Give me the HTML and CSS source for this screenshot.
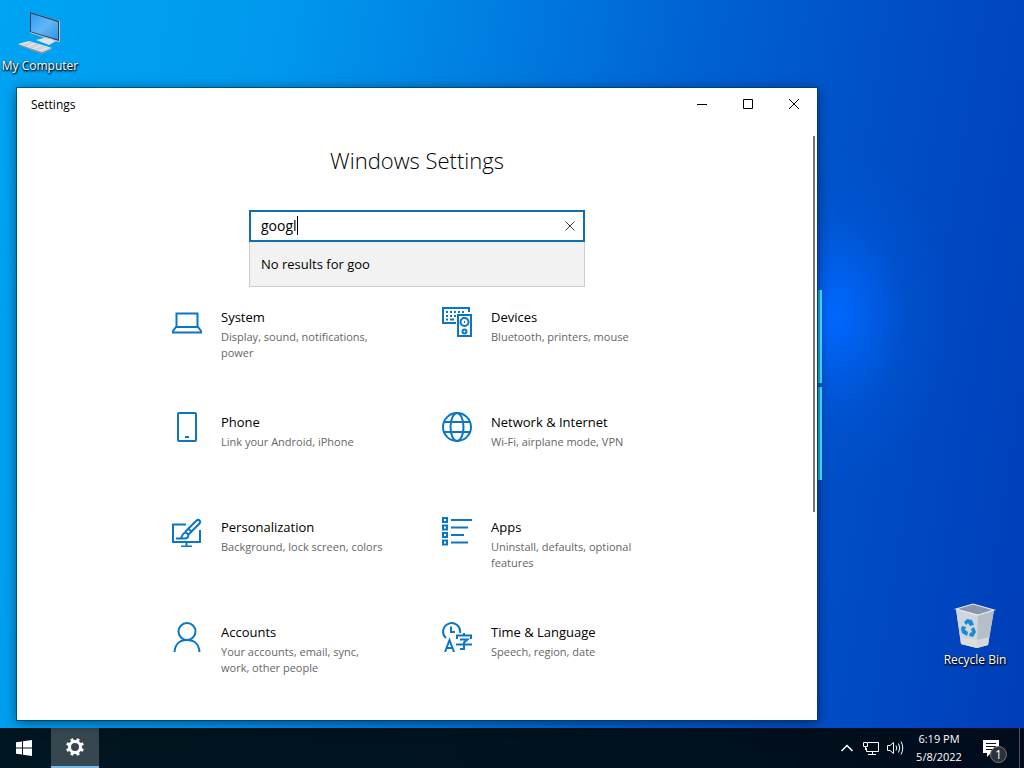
FILE: index.html
```html
<!DOCTYPE html>
<html lang="en">
<head>
<meta charset="utf-8">
<title>Windows Settings</title>
<link rel="stylesheet" href="styles.css">
</head>
<body>
<main class="desktop">
  <div class="logo-pane logo-pane-top"></div>
  <div class="logo-pane logo-pane-bottom"></div>

  <a class="shortcut shortcut-computer" href="#computer">
    <svg width="48" height="48" viewBox="0 0 48 48" aria-hidden="true">
      <defs><linearGradient id="screen" x1="0" y1="0" x2="1" y2="1"><stop offset="0" stop-color="#2f9cf0"/><stop offset=".5" stop-color="#62b6f8"/><stop offset="1" stop-color="#2f93e8"/></linearGradient></defs>
      <path d="M14 4 44 13V33.500L42 34 14 25Z" fill="#c9c4b8"/>
      <path d="M14 4 43 13V33L14 24Z" fill="#203e60"/>
      <path d="M15 5.500 42 14V31.500L15 23.500Z" fill="url(#screen)"/>
      <path d="M28 29 37 31V34L27 33Z" fill="#b6c8dc"/>
      <path d="M20 32 28 30 40 33 33 37Z" fill="#dce4ec"/>
      <path d="M2 36 13 33 36 40 26 45Z" fill="#e8ecee"/>
      <path d="M2 36 26 44 36 40V41L26 46 2 37Z" fill="#8798a8"/>
      <path d="M6 36 28 43M9 35 31 42M12 34 34 41M8 38 16 34M14 40 22 36M20 42 28 38" stroke="#b9c3cc" stroke-width=".7"/>
    </svg>
    <span>My Computer</span>
  </a>

  <a class="shortcut shortcut-bin" href="#recycle-bin">
    <svg width="48" height="48" viewBox="0 0 48 48" aria-hidden="true">
      <path d="M5 7 22 2 43 8 37 43 26 46 10 42Z" fill="#ccd3dc"/>
      <path d="M5 7 22 2 43 8 27 13Z" fill="#8796ad"/>
      <path d="M5 7 27 13 26 46 10 42Z" fill="#cfd6df"/>
      <path d="M27 13 43 8 37 43 26 46Z" fill="#b5bec9"/>
      <path d="M10 36 26 38 38 35 37 43 26 46 10 42Z" fill="#e1dfdc" opacity=".75"/>
      <path d="M5 7 22 2 43 8 27 13Z" fill="none" stroke="#e2e8f0" stroke-width="1.200"/>
      <path d="m13 20 3-3 5 1 2 5-4 1-2-3-2 2ZM11 24l4 1-1 3 3 2-1 4-5-3-1-4ZM23 25l2 5-3 5-4-1 1-3 2-1-1-3Z" fill="#188ad6"/>
    </svg>
    <span>Recycle Bin</span>
  </a>

  <section class="window" aria-label="Settings">
    <header class="titlebar">
      <span class="titlebar-name">Settings</span>
      <button class="caption-button" aria-label="Minimize"><svg width="12" height="12" viewBox="0 0 12 12"><path d="M1 6.500H11"/></svg></button>
      <button class="caption-button" aria-label="Maximize"><svg width="12" height="12" viewBox="0 0 12 12"><path d="M1.500 1.500H10.500V10.500H1.500Z"/></svg></button>
      <button class="caption-button" aria-label="Close"><svg width="12" height="12" viewBox="0 0 12 12"><path d="M1 1 11 11M11 1 1 11"/></svg></button>
    </header>
    <div class="content">
      <h1 class="title">Windows Settings</h1>
      <div class="search">
        <div class="search-box">
          <input class="search-input" type="text" aria-label="Find a setting" value="googl">
          <span class="caret"></span>
          <button class="search-clear" aria-label="Clear"><svg width="10" height="10" viewBox="0 0 10 10"><path d="M.5.5 9.500 9.500M9.500.5.5 9.500"/></svg></button>
        </div>
        <div class="search-results" role="status">No results for goo</div>
      </div>
      <nav class="categories">
        <a class="category" href="#system">
          <svg class="icon" viewBox="0 0 30 30"><path d="M4.500 20V6.500H25.500V20M4 20H26L29 24V25.500H1V24Z"/></svg>
          <span class="category-text"><strong>System</strong><small>Display, sound, notifications, power</small></span>
        </a>
        <a class="category" href="#devices">
          <svg class="icon" viewBox="0 0 30 30"><path d="M14 16H1V1H27V5M16 8H29V29H16Z"/><circle cx="22.500" cy="15" r="4"/><circle cx="22.500" cy="24.500" r="2"/><path d="M4 5H24" stroke-dasharray="2 2"/><path d="M4 9H14" stroke-dasharray="2 2"/><path d="M4 12.500H6M8 12.500H12"/><path d="M22 15h1M22 11h1"/></svg>
          <span class="category-text"><strong>Devices</strong><small>Bluetooth, printers, mouse</small></span>
        </a>
        <a class="category" href="#phone">
          <svg class="icon" viewBox="0 0 30 30"><rect x="6" y="1" width="18" height="28" rx="1"/><path d="M13 25H17"/></svg>
          <span class="category-text"><strong>Phone</strong><small>Link your Android, iPhone</small></span>
        </a>
        <a class="category" href="#network">
          <svg class="icon" viewBox="0 0 30 30"><circle cx="15" cy="15" r="14"/><ellipse cx="15" cy="15" rx="6.500" ry="14"/><path d="M2 10H28M2 20H28"/></svg>
          <span class="category-text"><strong>Network &amp; Internet</strong><small>Wi-Fi, airplane mode, VPN</small></span>
        </a>
        <a class="category" href="#personalization">
          <svg class="icon" viewBox="0 0 30 30"><path d="M14 7.500H1V25H28V13M14.500 25V29.500M9 29.500H20"/><path d="M4 21.500H12.500C15.500 21.500 17 19.500 16 17.500 14.500 15 11.500 15.500 10.500 18 10 20 9.500 21 8 21.500"/><path d="M13 15 24 4C27 1.500 29.500 4 27 7L16.500 17.500M16 11.500 20 15"/></svg>
          <span class="category-text"><strong>Personalization</strong><small>Background, lock screen, colors</small></span>
        </a>
        <a class="category" href="#apps">
          <svg class="icon" viewBox="0 0 30 30"><path d="M1 1H5V5H1ZM1 8.500H5V12.500H1ZM1 16H5V20H1ZM1 23.500H5V27.500H1Z"/><path d="M9 3H30M9 10.500H26M9 18H22M9 25.500H26"/></svg>
          <span class="category-text"><strong>Apps</strong><small>Uninstall, defaults, optional features</small></span>
        </a>
        <a class="category" href="#accounts">
          <svg class="icon" viewBox="0 0 30 30"><circle cx="15" cy="9.500" r="8.500"/><path d="M2.500 30C3 22 8 18 15 18S27 22 27.500 30"/></svg>
          <span class="category-text"><strong>Accounts</strong><small>Your accounts, email, sync,<br>work, other people</small></span>
        </a>
        <a class="category" href="#time">
          <svg class="icon" viewBox="0 0 30 30"><path d="M4 16A8.500 8.500 0 1 1 18 11M9 4.500V10H13"/><path d="M3 30 7.500 18 12 30M4.500 26H10.500"/><path d="M22 11V14M15 17V13.500H29V17M18 17.500H25.500L22 20.500V27H18M14 22.500H30"/></svg>
          <span class="category-text"><strong>Time &amp; Language</strong><small>Speech, region, date</small></span>
        </a>
      </nav>
      <div class="scroll-thumb"></div>
    </div>
  </section>
</main>

<footer class="taskbar">
  <button class="task-button task-start" aria-label="Start"><svg width="16" height="16" viewBox="0 0 16 16"><path fill="#fff" d="M0 2.300 6 1.400V7.500H0ZM7 1.200 16 0V7.500H7ZM0 8.500H6V14.600L0 13.700ZM7 8.500H16V16L7 14.800Z"/></svg></button>
  <button class="task-button task-active" aria-label="Settings"><svg width="20" height="20" viewBox="0 0 20 20"><circle cx="10" cy="10" r="5.500" fill="none" stroke="#fff" stroke-width="3"/><path d="M12.100 15.100 13.400 18.300M7.900 15.100 6.600 18.300M12.100 4.900 13.400 1.700M7.900 4.900 6.600 1.700M15.100 12.100 18.300 13.400M15.100 7.900 18.300 6.600M4.900 12.100 1.700 13.400M4.900 7.900 1.700 6.600" stroke="#fff" stroke-width="3"/></svg></button>
  <div class="tray">
    <button class="tray-button" aria-label="Show hidden icons"><svg width="14" height="14" viewBox="0 0 14 14"><path d="M1.500 10 7 4.500 12.500 10" stroke-width="1.500"/></svg></button>
    <button class="tray-button" aria-label="Network"><svg width="18" height="16" viewBox="0 0 18 16"><path d="M6 2.500H16.500V11.500H4.500V8M10.500 12V14.500M6 14.500H14M1.500 2.500H5.500V6.500H1.500ZM3.500 7V10"/></svg></button>
    <button class="tray-button" aria-label="Volume"><svg width="18" height="16" viewBox="0 0 18 16"><path d="M1.500 5.500H4L7.500 2.500V13.500L4 10.500H1.500ZM10 5.500Q11.500 8 10 10.500M12.500 3.500Q15 8 12.500 12.500M15 1.500Q18.500 8 15 14.500"/></svg></button>
    <button class="clock"><span>6:19 PM</span><span>5/8/2022</span></button>
    <button class="notifications" aria-label="Notifications"><svg width="18" height="17" viewBox="0 0 18 17"><path fill="#fff" d="M1 0H17V13H9L5 17V13H1Z"/><path d="M4 3.500H14M4 6.500H14M4 9.500H10" stroke="#07111f"/></svg><span class="badge">1</span></button>
    <span class="show-desktop"></span>
  </div>
</footer>
</body>
</html>
```
FILE: styles.css
```css
* { box-sizing: border-box; }

body {
  margin: 0;
  height: 100vh;
  display: flex;
  flex-direction: column;
  overflow: hidden;
  font-family: "Open Sans", "Noto Sans", sans-serif;
  color: #000;
}

button {
  border: 0;
  padding: 0;
  background: none;
  color: inherit;
  font: inherit;
  display: flex;
  align-items: center;
  justify-content: center;
}

a { color: inherit; text-decoration: none; }

.desktop {
  position: relative;
  flex: 1;
  background:
    radial-gradient(ellipse 120px 170px at 834px 315px, #0068ff, #0064f5aa 30%, #005ae044 60%, #0050d000),
    linear-gradient(99deg, #00a4f3 0%, #0098ee 25%, #0080e2 42%, #0062d2 62%, #0050c8 78%, #0046c0 90%, #003db8 100%);
}

.shortcut {
  position: absolute;
  width: 80px;
  display: flex;
  flex-direction: column;
  align-items: center;
  font-size: 12px;
  line-height: 16px;
  color: #fff;
  white-space: nowrap;
  text-shadow: 1px 1px 2px #000, 0 1px 2px #000;
}
.shortcut-computer { left: 0; top: 8px; }
.shortcut span { margin-top: 2px; }
.shortcut-bin { right: 9px; bottom: 60px; }

.logo-pane {
  position: absolute;
  z-index: 1;
  left: 818px;
  width: 4px;
  height: 93px;
  background: #1788b4;
  border-right: 2px solid #40d0ef;
}
.logo-pane-top { top: 290px; }
.logo-pane-bottom { top: 387px; }

.window {
  position: absolute;
  inset: 88px 207px 8px 17px;
  display: flex;
  flex-direction: column;
  background: #fff;
  box-shadow: 0 0 0 1px #003c66b3, 0 2px 12px #0008;
}

.titlebar { display: flex; height: 32px; align-items: center; }
.titlebar-name { flex: 1; padding-left: 14px; font-size: 12px; }
.caption-button { width: 46px; height: 32px; }
.caption-button svg, .search-clear svg { fill: none; stroke: #000; }

.content {
  position: relative;
  flex: 1;
  display: flex;
  flex-direction: column;
  align-items: center;
  padding-top: 24px;
}

.title { margin: 0; font-size: 22px; line-height: 32px; font-weight: 300; }

.search { width: 336px; margin-top: 34px; }
.search-box {
  position: relative;
  display: flex;
  height: 32px;
  border: 2px solid #0f6fb5;
}
.search-input {
  flex: 1;
  min-width: 0;
  border: 0;
  outline: 0;
  padding: 0 10px 2px;
  background: #fff;
  font: 14px "Open Sans", "Noto Sans", sans-serif;
}
.caret {
  position: absolute;
  left: 46px;
  top: 4px;
  width: 1px;
  height: 19px;
  background: #000;
}
.search-clear { width: 26px; }
.search-clear svg { stroke: #444; }
.search-results {
  height: 45px;
  padding: 0 11px;
  border: 1px solid #ccc;
  border-top: 0;
  background: #f2f2f2;
  font-size: 13px;
  line-height: 44px;
}

.categories {
  display: grid;
  grid-template-columns: repeat(2, 270px);
  grid-auto-rows: 105px;
  margin-top: 20px;
}
.category { display: flex; gap: 19px; padding-left: 25px; }
.icon {
  flex: none;
  width: 30px;
  height: 30px;
  fill: none;
  stroke: #0a76c4;
  stroke-width: 2;
}
.category-text { width: 170px; }
.category strong, .category small { display: block; }
.category strong { margin-bottom: 2px; font-size: 13px; line-height: 20px; font-weight: 400; }
.category small { font-size: 11px; line-height: 16px; color: #666; }

.scroll-thumb {
  position: absolute;
  right: 2px;
  top: 16px;
  width: 2px;
  height: 376px;
  background: #767676;
}

.taskbar {
  display: flex;
  height: 40px;
  background: linear-gradient(90deg, #001620, #00121e 60%, #000b1b);
  color: #fff;
}
.task-button { width: 48px; }
.task-start { margin-right: 3px; }
.task-active { background: #37474f; border-bottom: 2px solid #76b9ed; }
.tray { display: flex; margin-left: auto; }
.tray-button { width: 24px; }
.tray-button svg { fill: none; stroke: #fff; stroke-width: 1; }
.clock {
  width: 64px;
  flex-direction: column;
  font-size: 11px;
  line-height: 18px;
}
.notifications { position: relative; width: 48px; padding-right: 8px; }
.badge {
  position: absolute;
  left: 19px;
  top: 18px;
  width: 17px;
  height: 17px;
  border: 1px solid #777;
  border-radius: 50%;
  background: #2c323a;
  font-size: 12px;
  line-height: 15px;
}
.show-desktop { width: 5px; border-left: 1px solid #4a5260; }
```
